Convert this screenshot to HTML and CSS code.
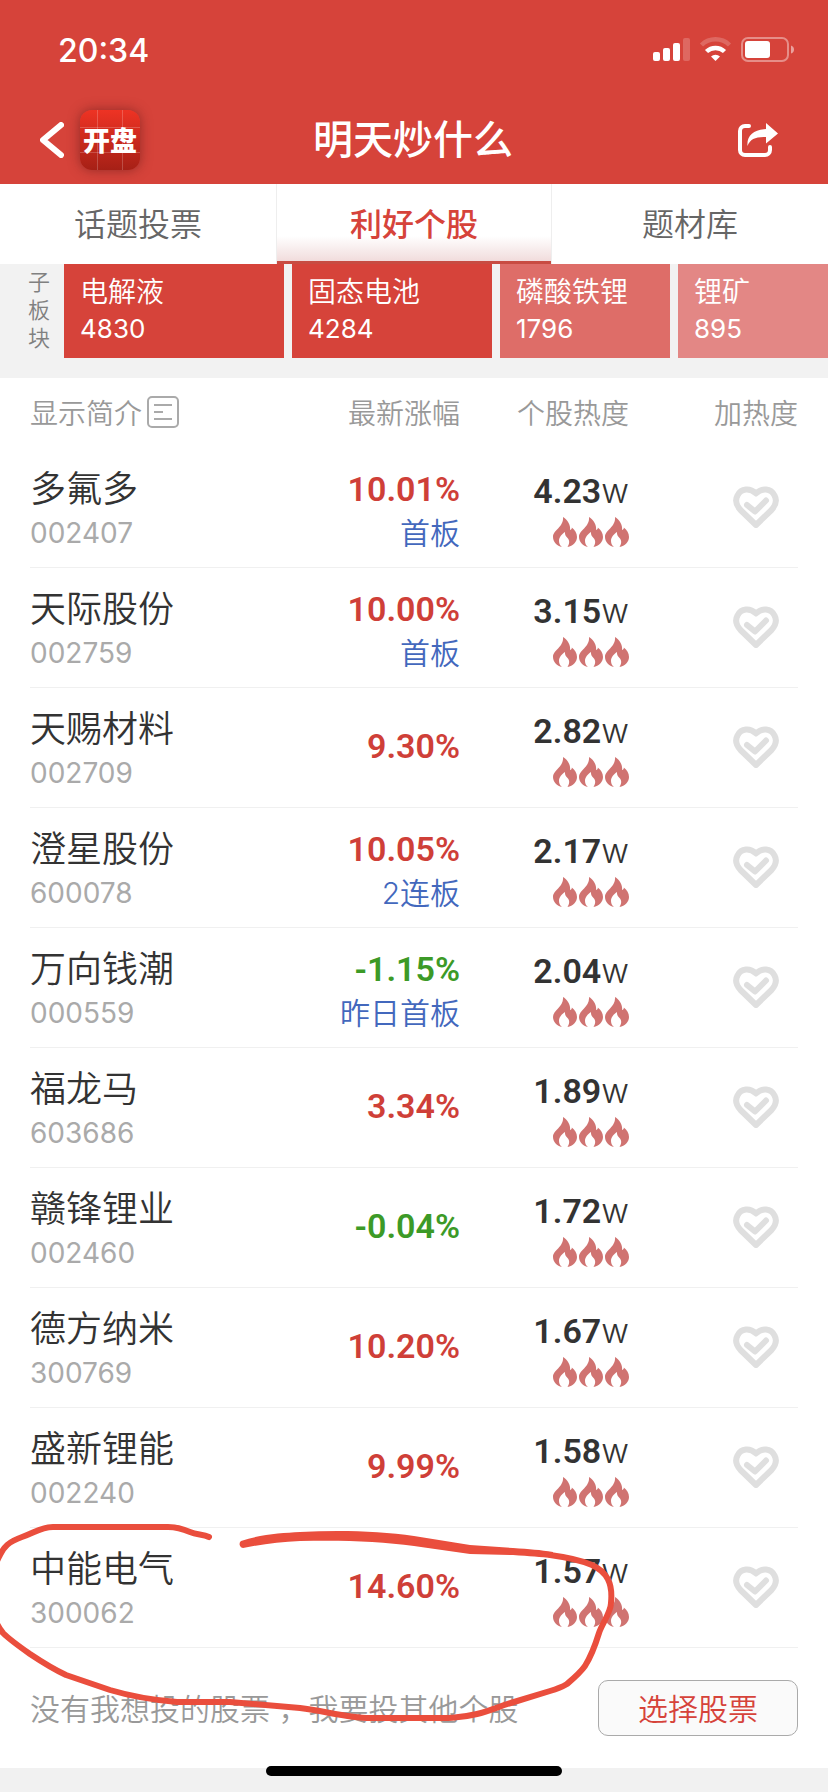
FILE: index.html
```html
<!DOCTYPE html>
<html lang="zh-CN">
<head>
    <meta charset="UTF-8">
    <meta name="viewport" content="width=device-width, initial-scale=1.0">
    <title>明天炒什么</title>
    <link rel="stylesheet" href="styles.css">
</head>
<body>
    <!-- Shared icons -->
    <svg class="sprite" aria-hidden="true">
        <symbol id="fire" viewBox="0 0 24 30">
            <path d="M10 0C14 2 18 8 17 13C18.500 12.500 19 11.500 18.800 10.500C22 13 24 16 24 20C24 25 20 29 14.500 30C17 26 16.500 23 14.500 21C12.500 19 11.800 17.500 12 15C9 17 6 20 6 24C6 27 7.500 29 9 30C4 29 0 25 0 20C0 13 11 10 10 0Z"/>
        </symbol>
        <symbol id="heart" viewBox="0 0 46 42">
            <path d="M23 39L7.500 24C3 19 2 14 4.500 9.500C8 2 17 1.500 23 7.500C29 1.500 38 2 41.500 9.500C44 14 43 19 38.500 24Z"/>
            <path d="M14 19L22 25.500L33 14.500"/>
        </symbol>
    </svg>

    <div class="page">
        <header class="topbar">
            <div class="status">
                <span class="time">20:34</span>
                <svg class="status-icons" viewBox="0 0 142 26">
                    <g fill="#fff">
                        <rect x="0" y="15" width="7" height="9" rx="2"/>
                        <rect x="10" y="11" width="7" height="13" rx="2"/>
                        <rect x="20" y="6" width="7" height="18" rx="2"/>
                        <rect x="30" y="1" width="7" height="23" rx="2" opacity=".2"/>
                        <path d="M62.500 24L58 19.500A6.500 6.500 0 0 1 67 19.500Z"/>
                        <rect x="92" y="4" width="25" height="17" rx="3"/>
                        <path d="M138 8.500Q141 9.500 141 12.500T138 16.500Z" opacity=".5"/>
                    </g>
                    <g fill="none" stroke="#fff">
                        <path d="M53.500 14.500A13 13 0 0 1 71.500 14.500" stroke-width="4.500"/>
                        <path d="M48.500 8A20 20 0 0 1 76.500 8" stroke-width="4.500" opacity=".2"/>
                        <rect x="89" y="1" width="46" height="23" rx="6" stroke-width="2" opacity=".4"/>
                    </g>
                </svg>
            </div>
            <nav class="navbar">
                <div class="nav-left">
                    <button class="icon-btn" aria-label="返回">
                        <svg class="back-icon" viewBox="0 0 24 36"><path d="M21 3L3 18L21 33"/></svg>
                    </button>
                    <a class="logo" href="#">开盘</a>
                </div>
                <h1>明天炒什么</h1>
                <div class="nav-right">
                    <button class="icon-btn" aria-label="分享">
                        <svg class="share-icon" viewBox="0 0 40 34">
                            <path class="share-box" d="M11 3H7A5 5 0 0 0 2 8V27A5 5 0 0 0 7 32H27A5 5 0 0 0 32 27V24"/>
                            <path d="M28 0L40 10.500L28 20.500V14C18 13.500 12 16 9.500 23C8.500 12 16 6.500 28 6Z" fill="#fff"/>
                        </svg>
                    </button>
                </div>
            </nav>
        </header>

        <div class="tabs">
            <button class="tab">话题投票</button>
            <button class="tab active">利好个股</button>
            <button class="tab">题材库</button>
        </div>

        <section class="plates">
            <div class="plates-label">子板块</div>
            <div class="plates-list">
                <button class="plate w220">电解液<span>4830</span></button>
                <button class="plate w200">固态电池<span>4284</span></button>
                <button class="plate w170 mid">磷酸铁锂<span>1796</span></button>
                <button class="plate w170 low">锂矿<span>895</span></button>
            </div>
        </section>

        <main class="content">
            <table class="stocks">
                <thead>
                    <tr>
                        <th class="col-name">
                            <button class="intro-btn">显示简介<svg viewBox="0 0 32 32"><rect x="1" y="1" width="30" height="30" rx="4"/><path d="M7 9H25M7 16H16M7 23H25"/></svg></button>
                        </th>
                        <th class="col-change">最新涨幅</th>
                        <th class="col-heat">个股热度</th>
                        <th class="col-like">加热度</th>
                    </tr>
                </thead>
                <tbody id="stockList"></tbody>
            </table>

            <div class="other">
                <p>没有我想投的股票 ，我要投其他个股</p>
                <button class="select-btn">选择股票</button>
            </div>
        </main>

        <!-- Hand drawn circle round the last stock -->
        <svg class="marker" viewBox="0 0 620 292">
            <path class="marker-line" d="M209 37C203 34 197 35 190 32C183 29 177 27 168 27H53C41 27 34 33 22 37C8 42 4 47 0 55C-14 80 -12 115 3 133C10 140 20 147 30 154C42 162 53 169 66 175L110 190C130 196 153 200 177 202H230L300 208C325 211 348 218 370 218H414C440 218 457 219 477 214C490 211 500 206 514 202L550 191C557 189 562 187 567 184C574 178 580 173 585 166C590 158 595 146 599 133C602 124 611 112 611 103C613 83 607 72 592 65C578 59 565 57 550 55"/>
            <path class="marker-fill" d="M241 41C262 34 282 33 300 32C340 30 380 31 414 36L470 45L513 48C530 49 540 50 553 52V58C540 57 530 56 513 55L470 54L414 46C380 41 340 40 300 41C280 42 262 44 243 48A4 4 0 0 1 241 41Z"/>
        </svg>
        <div class="home-bar"></div>
    </div>

    <script>
        const stocks = [
            { name: '多氟多', code: '002407', change: '10.01%', tag: '首板', heat: '4.23' },
            { name: '天际股份', code: '002759', change: '10.00%', tag: '首板', heat: '3.15' },
            { name: '天赐材料', code: '002709', change: '9.30%', tag: '', heat: '2.82' },
            { name: '澄星股份', code: '600078', change: '10.05%', tag: '2连板', heat: '2.17' },
            { name: '万向钱潮', code: '000559', change: '-1.15%', tag: '昨日首板', heat: '2.04' },
            { name: '福龙马', code: '603686', change: '3.34%', tag: '', heat: '1.89' },
            { name: '赣锋锂业', code: '002460', change: '-0.04%', tag: '', heat: '1.72' },
            { name: '德方纳米', code: '300769', change: '10.20%', tag: '', heat: '1.67' },
            { name: '盛新锂能', code: '002240', change: '9.99%', tag: '', heat: '1.58' },
            { name: '中能电气', code: '300062', change: '14.60%', tag: '', heat: '1.57' }
        ];

        const fire = '<svg><use href="#fire"/></svg>';

        document.getElementById('stockList').innerHTML = stocks.map(s => `
            <tr>
                <td class="col-name">
                    <div class="name">${s.name}</div>
                    <div class="code">${s.code}</div>
                </td>
                <td class="col-change ${s.tag ? '' : 'single'}">
                    <div class="change ${s.change[0] === '-' ? 'down' : 'up'}">${s.change}</div>
                    ${s.tag ? `<div class="tag">${s.tag}</div>` : ''}
                </td>
                <td class="col-heat">
                    <div class="heat">${s.heat}<span>w</span></div>
                    <div class="fires">${fire}${fire}${fire}</div>
                </td>
                <td class="col-like">
                    <button class="like" aria-label="加热度 ${s.name}"><svg><use href="#heart"/></svg></button>
                </td>
            </tr>
        `).join('');
    </script>
</body>
</html>
```
FILE: styles.css
```css
:root {
    --red: #d6433a;
    --grey-bg: #f2f2f2;
    --line: #f0f0f0;
    --grey-text: #999;
    --cjk: "Noto Sans CJK SC", sans-serif;
}

* {
    margin: 0;
    padding: 0;
    box-sizing: border-box;
}

body {
    font-family: Inter, var(--cjk);
    font-size: 28px;
    font-weight: 350;
    color: #333;
    background-color: #f1f1f1;
}

button {
    font: inherit;
    color: inherit;
    background: none;
    border: none;
    cursor: pointer;
}

svg {
    display: block;
}

.sprite {
    position: absolute;
    width: 0;
    height: 0;
}

.page {
    position: relative;
    min-height: 100vh;
    padding-bottom: 24px;
    overflow: hidden;
}

/* Top bar */
.topbar {
    background-color: var(--red);
    color: #fff;
}

.status {
    display: flex;
    justify-content: space-between;
    align-items: center;
    height: 100px;
    padding: 0 33px 0 58px;
}

.time {
    font-size: 32px;
    font-weight: 500;
}

.status-icons {
    width: 142px;
    height: 26px;
}

.navbar {
    display: grid;
    grid-template-columns: 1fr auto 1fr;
    align-items: center;
    height: 84px;
    padding: 0 50px 4px 40px;
}

.navbar h1 {
    padding-left: 8px;
    font-size: 40px;
    font-weight: 500;
    line-height: 60px;
}

.nav-left {
    display: flex;
    align-items: center;
    gap: 16px;
}

.nav-right {
    display: flex;
    justify-content: flex-end;
}

.back-icon {
    width: 24px;
    height: 36px;
    fill: none;
    stroke: #fff;
    stroke-width: 6;
    stroke-linecap: round;
    stroke-linejoin: round;
}

.logo {
    width: 60px;
    height: 60px;
    border-radius: 12px;
    background:
        linear-gradient(90deg, transparent 17px, rgba(255,255,255,0.2) 17px, rgba(255,255,255,0.2) 18px, transparent 18px, transparent 42px, rgba(255,255,255,0.2) 42px, rgba(255,255,255,0.2) 43px, transparent 43px),
        linear-gradient(transparent 17px, rgba(255,255,255,0.2) 17px, rgba(255,255,255,0.2) 18px, transparent 18px, transparent 42px, rgba(255,255,255,0.2) 42px, rgba(255,255,255,0.2) 43px, transparent 43px),
        linear-gradient(#ee3324, #a62016);
    box-shadow: 0 0 12px rgba(80,20,20,0.5);
    color: #fff;
    font-family: var(--cjk);
    font-size: 27px;
    font-weight: 900;
    line-height: 60px;
    text-align: center;
    text-decoration: none;
}

.share-icon {
    width: 40px;
    height: 34px;
}

.share-box {
    fill: none;
    stroke: #fff;
    stroke-width: 4;
    stroke-linecap: round;
}

/* Tabs */
.tabs {
    display: grid;
    grid-template-columns: repeat(3, 1fr);
    height: 80px;
    background-color: #fff;
}

.tab {
    padding-bottom: 4px;
    font-size: 32px;
    color: #666;
}

.tab.active {
    color: var(--red);
    font-weight: 500;
    background: linear-gradient(#fff 65%, #efd8d8);
    border: solid #eee;
    border-width: 0 1px;
    box-shadow: inset 0 -3px #c84c42;
}

/* Sub plates */
.plates {
    display: flex;
    padding-bottom: 20px;
    background-color: var(--grey-bg);
}

.plates-label {
    flex: none;
    width: 64px;
    padding: 4px 14px 0 28px;
    font-size: 22px;
    line-height: 28px;
    color: #808080;
}

.plates-list {
    display: flex;
    flex: 1;
    gap: 8px;
    overflow: hidden;
}

.plate {
    flex: none;
    height: 94px;
    padding: 6px 16px 10px;
    background-color: var(--red);
    color: #fff;
    line-height: 40px;
    text-align: left;
}

.plate span {
    display: block;
    font-size: 26px;
    font-weight: 400;
    line-height: 34px;
}

.plate.mid {
    background-color: #de6d68;
}

.plate.low {
    background-color: #e38785;
}

.w220 {
    width: 220px;
}

.w200 {
    width: 200px;
}

.w170 {
    width: 170px;
}

/* Stock table */
.content {
    padding: 0 30px;
    background-color: #fff;
}

.stocks {
    width: 100%;
    table-layout: fixed;
    border-collapse: separate;
    border-spacing: 0;
}

.stocks th {
    height: 70px;
    padding-bottom: 2px;
    color: var(--grey-text);
    font-weight: 350;
    text-align: right;
}

.stocks td {
    height: 120px;
    border-bottom: 1px solid var(--line);
    text-align: right;
    vertical-align: middle;
}

.stocks .col-name {
    width: 33%;
    text-align: left;
}

.col-change {
    width: 23%;
}

.col-heat,
.col-like {
    width: 22%;
}

td.col-name,
td.col-change,
td.col-like {
    padding-top: 6px;
}

td.col-change.single {
    padding: 0 0 4px;
}

.intro-btn {
    display: flex;
    align-items: center;
    gap: 5px;
}

.intro-btn svg {
    width: 32px;
    height: 32px;
    fill: none;
    stroke: #aaa;
    stroke-width: 2;
}

.name {
    font-size: 36px;
    line-height: 44px;
}

.code {
    color: #aaa;
    font-weight: 400;
    line-height: 44px;
}

.change,
.heat {
    font-family: Roboto, sans-serif;
    font-size: 34px;
    font-weight: 600;
    line-height: 44px;
}

.up {
    color: #cf3f38;
}

.down {
    color: #3c9a27;
}

.tag {
    color: #4368bd;
    font-size: 30px;
    line-height: 44px;
}

.heat span {
    font-family: Inter, sans-serif;
    font-weight: 300;
}

.fires {
    display: flex;
    justify-content: flex-end;
    gap: 2px;
    margin-top: 4px;
}

.fires svg {
    width: 24px;
    height: 30px;
    fill: #d07371;
}

.like {
    margin-right: 19px;
}

.like svg {
    width: 46px;
    height: 42px;
    fill: none;
    stroke: #dfdfdf;
    stroke-width: 6;
    stroke-linecap: round;
    stroke-linejoin: round;
}

/* Footer row */
.other {
    display: flex;
    justify-content: space-between;
    align-items: center;
    height: 120px;
    color: var(--grey-text);
    font-size: 30px;
}

.other p {
    padding-bottom: 2px;
}

.select-btn {
    width: 200px;
    height: 56px;
    padding-bottom: 2px;
    border: 1px solid #aaa;
    border-radius: 10px;
    background-color: #fafafa;
    color: var(--red);
}

.marker {
    position: absolute;
    left: 0;
    bottom: 0;
    width: 620px;
    height: 292px;
    pointer-events: none;
}

.marker-line {
    fill: none;
    stroke: #ea4e3d;
    stroke-width: 6;
    stroke-linecap: round;
    stroke-linejoin: round;
}

.marker-fill {
    fill: #ea4e3d;
}

.home-bar {
    position: absolute;
    left: 50%;
    bottom: 16px;
    width: 296px;
    height: 10px;
    margin-left: -148px;
    border-radius: 5px;
    background-color: #000;
}
```
